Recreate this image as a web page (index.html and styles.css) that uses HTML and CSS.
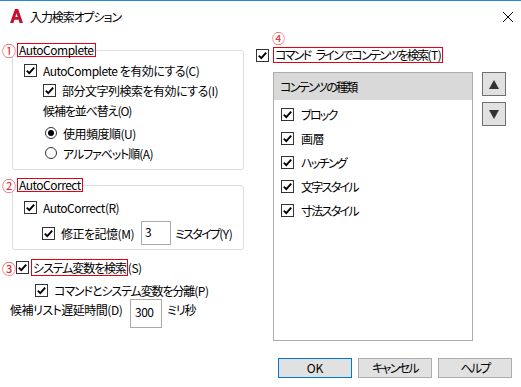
FILE: index.html
```html
<!DOCTYPE html>
<html lang="ja">
  <head>
    <meta charset="UTF-8" />
    <title>入力検索オプション</title>
    <link rel="stylesheet" href="styles.css">
  </head>
  <body>
    <div class="window">
      <div class="titlebar">
        <svg class="app-icon" viewBox="0 0 13 14">
          <path d="M0 14 L5 0 H8.2 L13 14 H9.6 L8.6 10.8 H4.4 L3.4 14 Z M5.3 8 H7.7 L6.5 4.2 Z" fill="#c8102e" fill-rule="evenodd"/>
        </svg>
        <span class="title k1">入力検索オプション</span>
        <svg class="close" viewBox="0 0 10 10">
          <path d="M0 0 L10 10 M10 0 L0 10" stroke="#000" stroke-width="1"/>
        </svg>
      </div>

      <div class="main">
        <div class="left">
          <div class="legend"><span class="num">①</span><span class="mark">AutoComplete</span></div>
          <div class="group g1">
            <div class="row">
              <svg class="cb" viewBox="0 0 13 13"><rect x="0.5" y="0.5" width="12" height="12" fill="#fff" stroke="#333"/><path d="M2.8 6.6 L5.3 9.1 L10.2 3.6" fill="none" stroke="#000" stroke-width="1.9"/></svg>
              <span>AutoComplete を有効にする(C)</span>
            </div>
            <div class="row indent">
              <svg class="cb" viewBox="0 0 13 13"><rect x="0.5" y="0.5" width="12" height="12" fill="#fff" stroke="#333"/><path d="M2.8 6.6 L5.3 9.1 L10.2 3.6" fill="none" stroke="#000" stroke-width="1.9"/></svg>
              <span>部分文字列検索を有効にする(I)</span>
            </div>
            <div class="row indent k1">候補を並べ替え(O)</div>
            <div class="row radio-row first">
              <span class="radio checked"></span>
              <span>使用頻度順(U)</span>
            </div>
            <div class="row radio-row">
              <span class="radio"></span>
              <span><span class="k1">アルファベット順</span>(A)</span>
            </div>
          </div>

          <div class="legend second"><span class="num">②</span><span class="mark">AutoCorrect</span></div>
          <div class="group g2">
            <div class="row">
              <svg class="cb" viewBox="0 0 13 13"><rect x="0.5" y="0.5" width="12" height="12" fill="#fff" stroke="#333"/><path d="M2.8 6.6 L5.3 9.1 L10.2 3.6" fill="none" stroke="#000" stroke-width="1.9"/></svg>
              <span>AutoCorrect(R)</span>
            </div>
            <div class="row memo">
              <svg class="cb" viewBox="0 0 13 13"><rect x="0.5" y="0.5" width="12" height="12" fill="#fff" stroke="#333"/><path d="M2.8 6.6 L5.3 9.1 L10.2 3.6" fill="none" stroke="#000" stroke-width="1.9"/></svg>
              <span class="memo-label">修正を記憶(M)</span>
              <span class="field">3</span>
              <span class="after-field"><span class="k2">ミスタイプ</span>(Y)</span>
            </div>
          </div>

          <div class="sys-row">
            <span class="num">③</span>
            <svg class="cb" viewBox="0 0 13 13"><rect x="0.5" y="0.5" width="12" height="12" fill="#fff" stroke="#333"/><path d="M2.8 6.6 L5.3 9.1 L10.2 3.6" fill="none" stroke="#000" stroke-width="1.9"/></svg>
            <span class="mark tall k1">システム変数を検索</span><span>(S)</span>
          </div>
          <div class="row split-row">
            <svg class="cb" viewBox="0 0 13 13"><rect x="0.5" y="0.5" width="12" height="12" fill="#fff" stroke="#333"/><path d="M2.8 6.6 L5.3 9.1 L10.2 3.6" fill="none" stroke="#000" stroke-width="1.9"/></svg>
            <span><span class="k1">コマンドとシステム変数を分離</span>(P)</span>
          </div>
          <div class="delay-row">
            <span class="delay-label">候補リスト遅延時間(D)</span>
            <span class="field big">300</span>
            <span class="after-field k1">ミリ秒</span>
          </div>
        </div>

        <div class="right">
          <div class="num num4">④</div>
          <div class="search-row">
            <svg class="cb" viewBox="0 0 13 13"><rect x="0.5" y="0.5" width="12" height="12" fill="#fff" stroke="#333"/><path d="M2.8 6.6 L5.3 9.1 L10.2 3.6" fill="none" stroke="#000" stroke-width="1.9"/></svg>
            <span class="mark wide"><span class="k2">コマンド</span><span class="space"></span><span class="k2">ラインでコンテンツを検索</span>(T)</span>
          </div>
          <div class="list-area">
            <div class="list">
              <div class="list-head k2">コンテンツの種類</div>
              <div class="list-body">
                <div class="item">
                  <svg class="cb" viewBox="0 0 13 13"><rect x="0.5" y="0.5" width="12" height="12" fill="#fff" stroke="#333"/><path d="M2.8 6.6 L5.3 9.1 L10.2 3.6" fill="none" stroke="#000" stroke-width="1.9"/></svg>
                  <span class="k2">ブロック</span>
                </div>
                <div class="item">
                  <svg class="cb" viewBox="0 0 13 13"><rect x="0.5" y="0.5" width="12" height="12" fill="#fff" stroke="#333"/><path d="M2.8 6.6 L5.3 9.1 L10.2 3.6" fill="none" stroke="#000" stroke-width="1.9"/></svg>
                  <span>画層</span>
                </div>
                <div class="item">
                  <svg class="cb" viewBox="0 0 13 13"><rect x="0.5" y="0.5" width="12" height="12" fill="#fff" stroke="#333"/><path d="M2.8 6.6 L5.3 9.1 L10.2 3.6" fill="none" stroke="#000" stroke-width="1.9"/></svg>
                  <span class="k2">ハッチング</span>
                </div>
                <div class="item">
                  <svg class="cb" viewBox="0 0 13 13"><rect x="0.5" y="0.5" width="12" height="12" fill="#fff" stroke="#333"/><path d="M2.8 6.6 L5.3 9.1 L10.2 3.6" fill="none" stroke="#000" stroke-width="1.9"/></svg>
                  <span class="k2">文字スタイル</span>
                </div>
                <div class="item">
                  <svg class="cb" viewBox="0 0 13 13"><rect x="0.5" y="0.5" width="12" height="12" fill="#fff" stroke="#333"/><path d="M2.8 6.6 L5.3 9.1 L10.2 3.6" fill="none" stroke="#000" stroke-width="1.9"/></svg>
                  <span class="k2">寸法スタイル</span>
                </div>
              </div>
            </div>
            <div class="updown">
              <div class="arrow-btn">
                <svg viewBox="0 0 10 9" width="10" height="9"><path d="M5 0 L10 9 H0 Z" fill="#333"/></svg>
              </div>
              <div class="arrow-btn">
                <svg viewBox="0 0 10 9" width="10" height="9"><path d="M0 0 H10 L5 9 Z" fill="#333"/></svg>
              </div>
            </div>
          </div>
        </div>
      </div>

      <div class="footer">
        <button class="btn default">OK</button>
        <button class="btn k2">キャンセル</button>
        <button class="btn k2">ヘルプ</button>
      </div>
    </div>
  </body>
</html>
```

FILE: styles.css
```css
* {
  box-sizing: border-box;
}
body {
  margin: 0;
  background-color: #fff;
  font-family: "Noto Sans CJK JP", sans-serif;
  font-size: 12px;
  font-feature-settings: "palt";
  letter-spacing: -0.5px;
  color: #000;
}
/* Meiryo UI kana are much narrower than Noto's */
.k1 {
  letter-spacing: -1.1px;
}
.k2 {
  letter-spacing: -1.7px;
}
.space {
  display: inline-block;
  width: 5px;
}
.window {
  width: 521px;
  height: 387px;
  border-top: 1px solid #2b88d8;
  background-color: #fff;
  display: flex;
  flex-direction: column;
  overflow: hidden;
}
.titlebar {
  height: 31px;
  display: flex;
  align-items: center;
  padding-left: 10px;
  flex: none;
}
.app-icon {
  width: 13px;
  height: 14px;
  margin-top: -2px;
}
.title {
  margin-left: 7px;
  line-height: 16px;
}
.close {
  width: 10px;
  height: 10px;
  margin-left: auto;
  margin-right: 8px;
}
.main {
  display: flex;
  flex: none;
}
.left {
  width: 252px;
  padding-left: 3px;
}
.legend {
  display: flex;
  align-items: center;
  width: fit-content;
  height: 14px;
  margin-top: 11px;
  background-color: #fff;
  position: relative;
}
.legend.second {
  margin-top: 8px;
}
.num {
  color: #e8262d;
  font-size: 14px;
  line-height: 14px;
  letter-spacing: 0;
  width: 15px;
  margin-left: -1px;
  flex: none;
}
.mark {
  border: 1px solid #e60012;
  line-height: 12px;
  padding: 0 1px;
}
.mark.tall {
  line-height: 15px;
}
.mark.wide {
  line-height: 14px;
}
.group {
  width: 232px;
  margin-left: 9px;
  margin-top: -7px;
  border: 1px solid #d5dfe5;
  border-radius: 3px;
}
.g1 {
  padding: 9px 0 6px 11px;
}
.g2 {
  padding: 11px 0 4px 11px;
}
.row {
  display: flex;
  align-items: center;
  height: 20px;
}
.indent {
  padding-left: 19px;
}
.cb {
  width: 13px;
  height: 13px;
  margin-right: 6px;
  flex: none;
}
.radio-row {
  padding-left: 21px;
}
.radio-row.first {
  margin-top: 3px;
}
.radio {
  width: 12px;
  height: 12px;
  border: 1px solid #333;
  border-radius: 50%;
  margin-right: 6px;
  display: flex;
  align-items: center;
  justify-content: center;
  flex: none;
}
.radio.checked::after {
  content: "";
  width: 6px;
  height: 6px;
  border-radius: 50%;
  background-color: #000;
}
.memo {
  height: 24px;
  margin-top: 4px;
  padding-left: 18px;
}
.memo-label {
  width: 80px;
}
.field {
  width: 30px;
  height: 24px;
  border: 1px solid #aaa;
  padding: 3px 0 0 3px;
  line-height: 14px;
  flex: none;
}
.field.big {
  width: 32px;
  height: 29px;
  padding-top: 5px;
  padding-left: 4px;
}
.after-field {
  margin-left: 4px;
}
.sys-row {
  display: flex;
  align-items: center;
  height: 17px;
  margin-top: 9px;
}
.sys-row .num {
  width: 14px;
}
.sys-row .cb {
  margin-right: 2px;
}
.split-row {
  height: 18px;
  margin-top: 5px;
  padding-left: 32px;
}
.delay-row {
  display: flex;
  align-items: flex-start;
  padding-left: 7px;
}
.delay-label {
  width: 120px;
  margin-top: 3px;
  line-height: 16px;
}
.delay-row .after-field {
  margin-left: 5px;
  margin-top: 3px;
  line-height: 16px;
}
.right {
  padding-left: 4px;
}
.num4 {
  margin-left: 16px;
  font-size: 13px;
  line-height: 12px;
  height: 12px;
}
.search-row {
  display: flex;
  align-items: center;
  height: 16px;
  margin-top: 3px;
}
.search-row .cb {
  margin-right: 4px;
}
.list-area {
  display: flex;
  align-items: flex-start;
  margin-top: 9px;
  margin-left: 17px;
}
.list {
  width: 200px;
  height: 269px;
  border: 1px solid #adadad;
}
.list-head {
  height: 27px;
  background-color: #d9d9d9;
  padding-left: 6px;
  display: flex;
  align-items: center;
}
.list-body {
  padding: 2px 0 0 7px;
}
.item {
  display: flex;
  align-items: center;
  height: 24px;
}
.item .cb {
  margin-right: 7px;
}
.updown {
  display: flex;
  flex-direction: column;
  gap: 6px;
  margin-left: 9px;
}
.arrow-btn {
  width: 24px;
  height: 24px;
  border: 1px solid #707070;
  background-color: #e1e1e1;
  display: flex;
  align-items: center;
  justify-content: center;
}
.footer {
  display: flex;
  justify-content: flex-end;
  gap: 6px;
  margin-top: auto;
  padding: 0 9px 9px 0;
}
.btn {
  width: 74px;
  height: 20px;
  padding: 0;
  border: 1px solid #adadad;
  background-color: #e1e1e1;
  font-family: inherit;
  font-size: 12px;
  font-feature-settings: "palt";
  color: #000;
  line-height: 16px;
}
.btn.default {
  border-color: #0078d7;
}
```
